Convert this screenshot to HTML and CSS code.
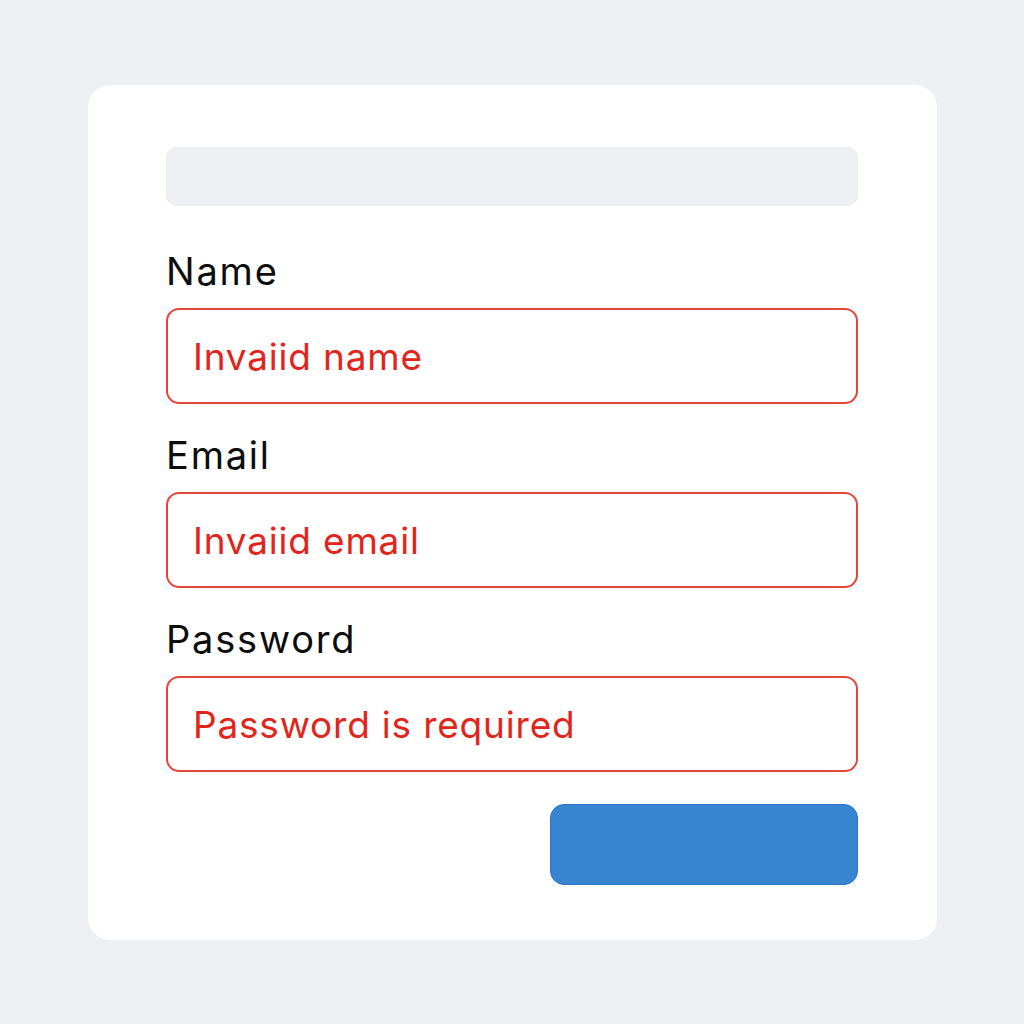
FILE: index.html
```html
<!DOCTYPE html>
<html lang="en">
<head>
  <meta charset="UTF-8" />
  <meta name="viewport" content="width=device-width, initial-scale=1.0" />
  <title>Sign up</title>
  <link rel="stylesheet" href="styles.css">
</head>
<body>
  <div class="card">
    <div class="title-bar"></div>

    <div class="field">
      <label class="field-label">Name</label>
      <div class="field-input">Invaiid name</div>
    </div>

    <div class="field">
      <label class="field-label">Email</label>
      <div class="field-input">Invaiid email</div>
    </div>

    <div class="field">
      <label class="field-label">Password</label>
      <div class="field-input">Password is required</div>
    </div>

    <div class="actions">
      <button class="submit-button"></button>
    </div>
  </div>
</body>
</html>
```

FILE: styles.css
```css
body {
  font-family: Inter, "Noto Sans", Arial, sans-serif;
  background-color: #eeeff3;
  margin: 0;
  padding: 85px 0 0 88px;
  min-height: 100vh;
  box-sizing: border-box;
}

.card {
  background-color: #fff;
  border-radius: 22px;
  width: 849px;
  height: 855px;
  box-sizing: border-box;
  padding: 62px 79px 0 78px;
}

.title-bar {
  height: 59px;
  background-color: #eeeff2;
  border-radius: 10px;
  margin-bottom: 42px;
}

.field {
  margin-bottom: 28px;
}

.field-label {
  display: block;
  font-size: 38px;
  line-height: 46px;
  letter-spacing: 1.8px;
  color: #0d0d0d;
  margin-bottom: 14px;
}

.field-input {
  height: 96px;
  box-sizing: border-box;
  border: 2px solid #e2473b;
  border-radius: 13px;
  padding: 0 25px;
  display: flex;
  align-items: center;
  font-size: 37px;
  letter-spacing: 0.8px;
  color: #e1251b;
}

.actions {
  display: flex;
  justify-content: flex-end;
  margin-top: 32px;
}

.submit-button {
  width: 308px;
  height: 81px;
  background-color: #3784d0;
  border: 1px solid #2b74c2;
  border-radius: 14px;
  cursor: pointer;
}
```
